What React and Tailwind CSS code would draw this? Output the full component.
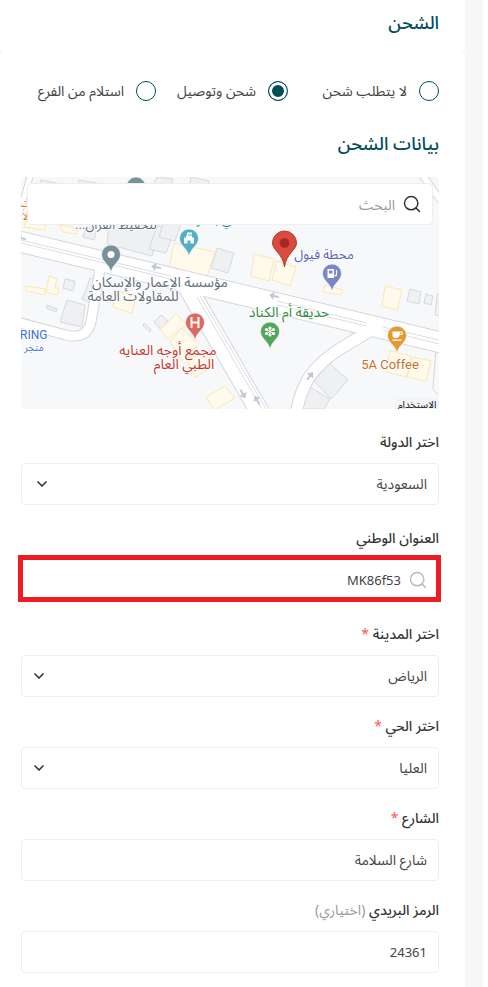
import React, { useState } from 'react';
import { ChevronDown, Search } from 'lucide-react';

const shippingTypes = [
  { id: 'none', title: 'لا يتطلب شحن' },
  { id: 'delivery', title: 'شحن وتوصيل' },
  { id: 'branch', title: 'استلام من الفرع' },
];

const inputStyle =
  'block w-full h-[42px] rounded border border-[#eeeeee] bg-white px-[11px] text-[#444444] outline-none';

const greyBuildings = [
  '88,44 130,46 139,51 131,79 86,67',
  '136,49 154,51 145,76 128,72',
  '145,38 162,41 154,64 138,60',
  '196,71 213,76 207,96 190,91',
  '46,123 64,128 61,150 39,145',
  '26,128 36,132 35,135 25,131',
  '123,146 130,152 129,155 122,149',
  '140,138 147,144 140,153 133,145',
  '308,186 327,203 310,222 293,204',
  '289,210 309,222 303,232 278,232',
  '389,112 400,115 398,127 386,124',
  '405,117 412,119 410,128 403,126',
  '416,117 424,119 422,140 414,138',
  '66,110 69,101 75,103 71,126 61,122',
  '20,3 40,7 36,22 16,18',
  '58,3 76,6 72,20 54,16',
  '136,0 152,2 148,16 130,13',
  '170,0 188,4 184,16 168,12',
  '65,50 76,52 73,63 62,60',
  '44,102 54,104 52,114 42,111',
];

const yellowBuildings = [
  '153,66 194,75 185,103 148,92',
  '233,77 253,82 248,104 230,99',
  '255,84 275,90 269,109 251,103',
  '28,99 36,102 34,110 38,112 36,118 25,115',
  '5,109 24,112 24,118 5,114',
  '93,113 115,119 111,136 92,130',
  '155,137 165,147 147,162 139,153',
  '161,151 178,167 161,184 149,165',
  '165,181 180,178 191,190 174,200',
  '204,209 214,221 193,233 185,220',
  '364,109 381,113 376,133 361,129',
  '304,108 322,113 320,118 302,115',
  '369,174 390,179 386,200 365,195',
  '392,180 410,184 405,204 386,200',
  '330,155 335,157 333,164 327,162',
  '5,43 25,47 24,53 3,50',
  '38,48 57,51 55,57 42,55',
];

const Pin = ({ x, y, color, children }) => (
  <g transform={`translate(${x} ${y})`}>
    <path
      d="M0 0C-1-9-9.500-11-9.500-18.500a9.500 9.500 0 0 1 19 0C9.500-11 1-9 0 0Z"
      fill={color}
      stroke="#ffffff"
      strokeOpacity="0.600"
    />
    <g transform="translate(0 -18.5)">{children}</g>
  </g>
);

const MapLabel = ({ x, y, color, size = 13, children, anchor = 'middle', rtl = true }) => (
  <text
    x={x}
    y={y}
    fill={color}
    fontSize={size}
    textAnchor={anchor}
    direction={rtl ? 'rtl' : 'ltr'}
    stroke="#ffffff"
    strokeWidth="2"
    paintOrder="stroke"
    strokeLinejoin="round"
  >
    {children}
  </text>
);

const Arrow = ({ x, y, angle }) => (
  <path
    transform={`translate(${x} ${y}) rotate(${angle})`}
    d="M-5-1H0v-3L5 0 0 4V1h-5Z"
    fill="#c3c7da"
  />
);

const MapView = () => (
  <svg
    viewBox="0 0 418 232"
    preserveAspectRatio="xMidYMid slice"
    className="block w-full rounded bg-[#f7f8fa] font-['Roboto','Noto_Sans_Arabic','DejaVu_Sans',sans-serif]"
    role="img"
    aria-label="خريطة"
  >
    <g fill="#eff0f2" stroke="#d7d9de">
      {greyBuildings.map((points, i) => (
        <polygon key={i} points={points} />
      ))}
    </g>
    <g fill="#fffaec" stroke="#fbe7b0">
      {yellowBuildings.map((points, i) => (
        <polygon key={i} points={points} />
      ))}
    </g>

    {/* road outlines go first so the junctions stay open */}
    <g fill="none" stroke="#d3d6dc">
      <path d="M-4 64 422 166" strokeWidth="22" />
      <path d="M160 99 244 244" strokeWidth="20" />
      <path d="M-4 145 45 158Q66 163 70 145L79 92" strokeWidth="11" />
      <path d="M362 146 322 170Q296 186 286 204 278 218 275 238" strokeWidth="13" />
      <path d="M-2 38 10-4" strokeWidth="7" />
      <path d="M400-4 420 24" strokeWidth="8" />
      <path d="M415 172 412 210Q412 216 420 218" strokeWidth="1" />
    </g>
    <g fill="none" stroke="#ffffff">
      <path d="M-4 64 422 166" strokeWidth="20" />
      <path d="M160 99 244 244" strokeWidth="18" />
      <path d="M-4 145 45 158Q66 163 70 145L79 92" strokeWidth="9" />
      <path d="M362 146 322 170Q296 186 286 204 278 218 275 238" strokeWidth="11" />
      <path d="M-2 38 10-4" strokeWidth="5" />
      <path d="M400-4 420 24" strokeWidth="6" />
    </g>
    <g fill="none" stroke="#dcdee4">
      <path d="M0 63 150 99M0 66 150 102M256 124 346 146M256 128 346 149M362 150 418 163M362 153 418 167" />
      <path d="M176 120 241 232M179 119 245 232" />
    </g>

    <Arrow x={135} y={90} angle={194} />
    <Arrow x={253} y={119} angle={194} />
    <Arrow x={0} y={61} angle={194} />
    <Arrow x={289} y={199} angle={-52} />
    <Arrow x={222} y={217} angle={60} />
    <Arrow x={236} y={223} angle={238} />

    <MapLabel x={95} y={52} color="#5f6f7b">لتحفيظ القرآن...</MapLabel>
    <MapLabel x={9} y={30} color="#d97a2b" size={12}>بيت</MapLabel>
    <MapLabel x={6} y={43} color="#d97a2b" size={12}>الا</MapLabel>
    <MapLabel x={196} y={47} color="#2b8c9b">في بـ . ر</MapLabel>

    <Pin x={90} y={96} color="#78909c">
      <circle r="3.500" fill="#ffffff" />
    </Pin>
    <Pin x={115} y={28} color="#78909c">
      <circle r="3.500" fill="#ffffff" />
    </Pin>
    <Pin x={168} y={80} color="#4fafc6">
      <path d="M-5 5v-6h2v-2h1v-3H3v2H-1v1H3v2h2v6H1.500V2h-3v3Z" fill="#ffffff" />
    </Pin>
    <Pin x={311} y={115} color="#7986cb">
      <path d="M2.500 1.500q2 2 2-.500V-3.500" fill="none" stroke="#ffffff" strokeWidth="1.200" />
      <path d="M-4.500 4.500v-9H2v9ZM-3-3v3h3.500v-3Z" fill="#ffffff" fillRule="evenodd" />
    </Pin>
    <Pin x={174} y={164} color="#db6b60">
      <path d="M-3.500-5.500v11M3.500-5.500v11M-3.500 0h7" stroke="#ffffff" strokeWidth="2" />
    </Pin>
    <Pin x={249} y={173} color="#53a65c">
      <g fill="#ffffff">
        <circle cy="-3.500" r="1.600" />
        <circle cy="3.500" r="1.600" />
        <circle cx="-3.500" cy="-2" r="1.600" />
        <circle cx="3.500" cy="-2" r="1.600" />
        <circle cx="-3.500" cy="2" r="1.600" />
        <circle cx="3.500" cy="2" r="1.600" />
      </g>
      <path d="M0-3.500v7M-3.500-2l7 4M3.500-2l-7 4" stroke="#ffffff" />
    </Pin>
    <Pin x={376} y={177} color="#e39a36">
      <path
        d="M-4.500-4H5.500v3.500H2.500q-.500 3-3 3h-1q-3 0-3-3ZM3-3v1.500h1.500v-1.500ZM-4.500 4h9v1.200h-9Z"
        fill="#ffffff"
        fillRule="evenodd"
      />
    </Pin>

    {/* selected location */}
    <path
      d="M263.500 90C262 77 251.500 73 251.500 66a12 12 0 0 1 24 0C275.500 73 265 77 263.500 90Z"
      fill="#d84b3e"
      stroke="#b93a30"
    />
    <circle cx="263.500" cy="66" r="4.800" fill="#a22a20" />

    <MapLabel x={303} y={82} color="#5561b8">محطة فيول</MapLabel>
    <MapLabel x={139} y={110} color="#5f6f7b" size={14}>مؤسسة الإعمار والإسكان</MapLabel>
    <MapLabel x={112} y={124} color="#5f6f7b" size={14}>للمقاولات العامة</MapLabel>
    <MapLabel x={268} y={140} color="#2f8a3b" size={14}>حديقة أم الكناد</MapLabel>
    <MapLabel x={147} y={178} color="#c5362c" size={14}>مجمع أوجه العنايه</MapLabel>
    <MapLabel x={163} y={192} color="#c5362c" size={14}>الطبي العام</MapLabel>
    <MapLabel x={-1} y={162} color="#3a70dd" size={12} anchor="start" rtl={false}>RING</MapLabel>
    <MapLabel x={13} y={174} color="#3a70dd" size={10}>متجر</MapLabel>
    <MapLabel x={369} y={192} color="#c9701f" rtl={false}>5A Coffee</MapLabel>
    <rect x="374" y="221" width="44" height="11" fill="#f3f4f5" />
    <text x="396" y="231" fontSize="10" fill="#111111" textAnchor="middle" direction="rtl">الاستخدام</text>
  </svg>
);

const Label = ({ id, children }) => (
  <label htmlFor={id} className="block mb-2.5 text-sm leading-[22px] font-medium text-[#333333]">
    {children}
  </label>
);

const SelectField = ({ id, value, icon }) => (
  <div className="relative">
    <select id={id} defaultValue={value} className={`${inputStyle} text-sm appearance-none`}>
      <option value={value}>{value}</option>
    </select>
    <ChevronDown className={`absolute top-[13px] size-4 text-[#333333] pointer-events-none ${icon}`} strokeWidth={2.5} />
  </div>
);

const Star = () => <span className="font-normal text-[#ff5555]">*</span>;

const App = () => {
  const [type, setType] = useState('delivery');

  return (
    <div dir="rtl" className="min-h-screen flex flex-col bg-white pr-[5px] font-['Noto_Sans','Noto_Sans_Arabic','DejaVu_Sans',sans-serif]">
      <div className="flex-1 flex flex-col bg-[#f7f7f7] pr-[18px]">
        <header className="bg-white pr-[26px] pl-[21px] pt-2 pb-[15px]">
          <h1 className="text-lg leading-7 font-medium text-[#004d5a]">الشحن</h1>
        </header>

        <main className="flex-1 rounded-t-md bg-white pr-[26px] pl-[21px] pt-7 pb-3.5">
          <div className="grid grid-cols-[151fr_132fr_135fr] mb-[26px]">
            {shippingTypes.map((item) => (
              <label key={item.id} className="flex items-center gap-3 h-6 text-sm text-[#444444] whitespace-nowrap">
                <input
                  type="radio"
                  name="shipping"
                  checked={type === item.id}
                  onChange={() => setType(item.id)}
                  className="appearance-none shrink-0 size-5 rounded-full border border-[#004d5a] bg-white checked:bg-[#004d5a] checked:shadow-[inset_0_0_0_3px_white]"
                />
                {item.title}
              </label>
            ))}
          </div>

          <h2 className="mb-5 text-lg leading-7 font-medium text-[#004d5a]">بيانات الشحن</h2>

          <div className="relative mb-[22px]">
            <MapView />
            <div className="absolute top-1.5 inset-x-1.5">
              <input
                type="text"
                aria-label="البحث"
                placeholder="البحث"
                className={`${inputStyle} pr-[37px] text-sm placeholder:text-[#999999]`}
              />
              <Search className="absolute top-[11px] right-[11px] size-5 text-[#333333]" strokeWidth={1.75} />
            </div>
          </div>

          <div className="mb-[22px]">
            <Label id="country">اختر الدولة</Label>
            <SelectField id="country" value="السعودية" icon="left-[13px]" />
          </div>

          <div className="mb-[22px]">
            <Label id="address">العنوان الوطني</Label>
            <div className="relative">
              <input id="address" type="text" defaultValue="MK86f53" className={`${inputStyle} pr-[37px] text-[13px]`} />
              <Search className="absolute top-[11px] right-[11px] size-5 text-[#bbbbbb]" strokeWidth={1.75} />
              <span className="absolute -left-[3px] -right-0.5 -top-1 -bottom-px border-[5px] border-[#ee1c24] pointer-events-none" />
            </div>
          </div>

          <div className="mb-[18px]">
            <Label id="city">اختر المدينة <Star /></Label>
            <SelectField id="city" value="الرياض" icon="left-2.5" />
          </div>

          <div className="mb-[18px]">
            <Label id="district">اختر الحي <Star /></Label>
            <SelectField id="district" value="العليا" icon="left-2.5" />
          </div>

          <div className="mb-[18px]">
            <Label id="street">الشارع <Star /></Label>
            <input id="street" type="text" defaultValue="شارع السلامة" className={`${inputStyle} text-sm`} />
          </div>

          <div>
            <Label id="postal">
              الرمز البريدي <span className="font-normal text-[#999999]">(اختياري)</span>
            </Label>
            <input id="postal" type="text" defaultValue="24361" className={`${inputStyle} text-[13px]`} />
          </div>
        </main>
      </div>
    </div>
  );
};

export default App;
